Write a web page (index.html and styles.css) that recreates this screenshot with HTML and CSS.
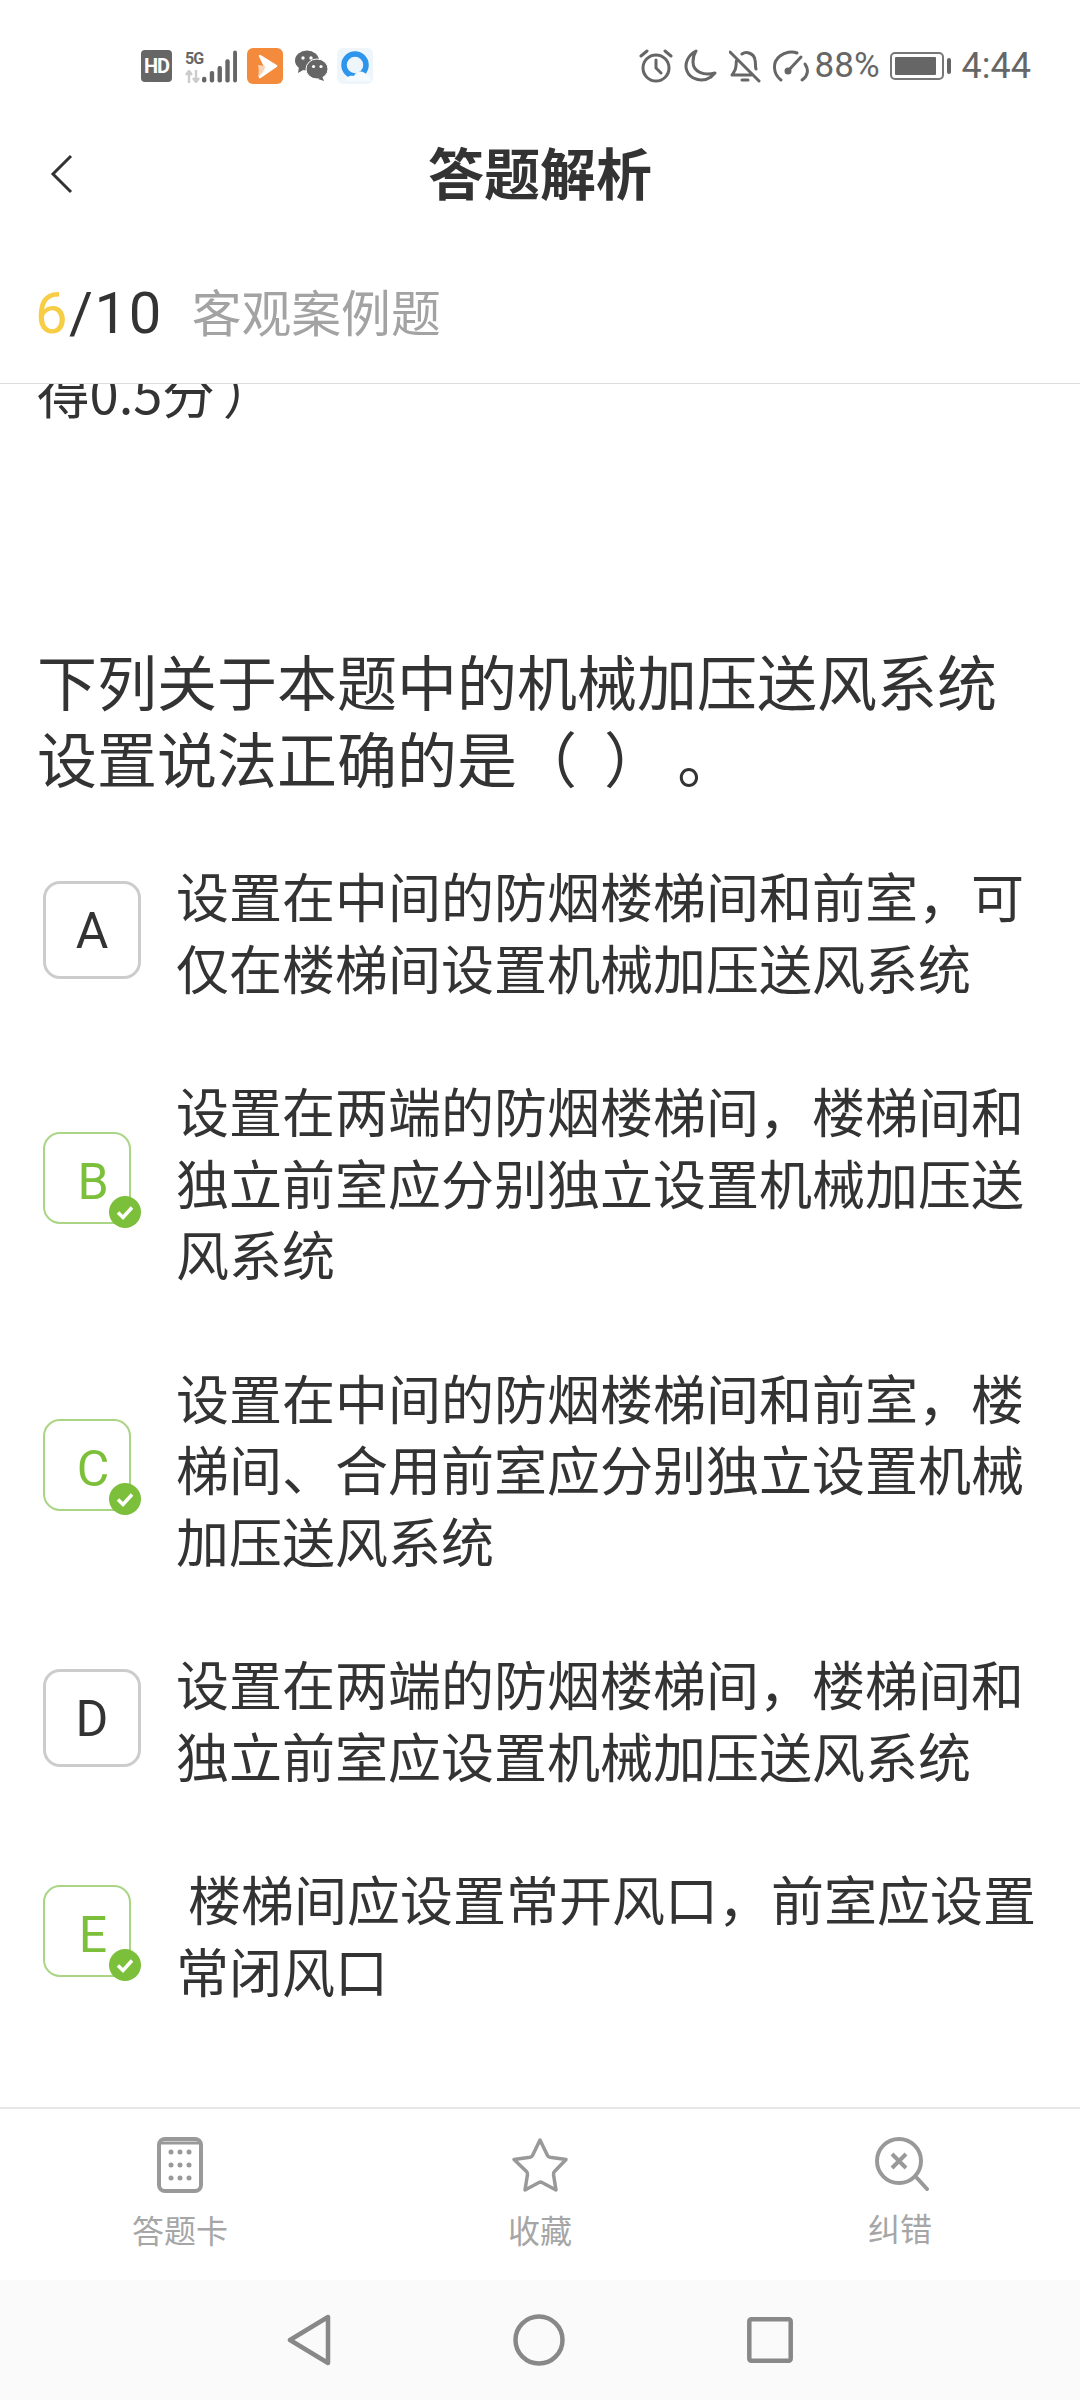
FILE: index.html
```html
<!DOCTYPE html>
<html lang="zh-CN">
<head>
<meta charset="utf-8">
<title>答题解析</title>
<link rel="stylesheet" href="styles.css">
</head>
<body>
<div class="app">
  <div class="status">
    <div class="status-left">
      <span class="hd">HD</span>
      <span class="signal">
        <span class="net"><span class="net-5g">5G</span><svg class="net-arrows" width="15" height="13" viewBox="0 0 15 13"><path d="M4 13V2M1 5l3-4 3 4M11 0v11M8 8l3 4 3-4" fill="none" stroke="#ccc" stroke-width="2.4"/></svg></span>
        <svg class="bars" width="36" height="33" viewBox="0 0 36 33"><g fill="#666"><rect x="0" y="27" width="4.500" height="6" rx="2"/><rect x="8" y="21" width="4.500" height="12" rx="2"/><rect x="16" y="16" width="4.500" height="17" rx="2"/><rect x="24" y="9" width="4.500" height="24" rx="2"/><rect x="32" y="0" width="4" height="33" rx="2"/></g></svg>
      </span>
      <svg class="app-ico" width="36" height="36" viewBox="0 0 36 36"><rect width="36" height="36" rx="6" fill="#f48a3c"/><path d="M13 8l16 10-16 11 5-11z" fill="#fff" stroke="#fff" stroke-width="2.500" stroke-linejoin="round"/><path d="M11 17l7 1c0 4-3 8-7 11 1-4 1-8 0-12z" fill="#fbd3b4"/></svg>
      <svg class="app-ico wechat" width="34" height="32" viewBox="0 0 34 32"><ellipse cx="13" cy="10.500" rx="12" ry="10" fill="#666"/><path d="M5 17l-1 6 7-4z" fill="#666"/><circle cx="9" cy="8" r="1.700" fill="#fff"/><circle cx="17" cy="8" r="1.700" fill="#fff"/><ellipse cx="23" cy="19" rx="11" ry="10" fill="#666" stroke="#fff" stroke-width="1"/><path d="M28 26l2 5-6-2z" fill="#666"/><circle cx="19.500" cy="16.500" r="1.600" fill="#fff"/><circle cx="27" cy="16.500" r="1.600" fill="#fff"/></svg>
      <svg class="app-ico" width="36" height="36" viewBox="0 0 36 36"><rect width="36" height="36" rx="6" fill="#eef5fb"/><circle cx="18" cy="17" r="11" fill="none" stroke="#2d96ec" stroke-width="5.500"/><path d="M9 33c0-4 4-6 8-5 2-6 11-6 13 0 3 0 4 2 4 5z" fill="#f6fbff"/></svg>
    </div>
    <div class="status-right">
      <svg class="ri-a" width="34" height="34" viewBox="0 0 34 34" fill="none" stroke="#666" stroke-width="3" stroke-linecap="round"><circle cx="17" cy="19" r="13"/><path d="M17 11v8l5 5M2 7l6-5M32 7l-6-5"/></svg>
      <svg class="ri-b" width="34" height="34" viewBox="0 0 34 34" fill="none" stroke="#666" stroke-width="3" stroke-linejoin="round"><path d="M13 2C5 6 1 15 4 22c3 8 15 12 24 6l4-4c-11 3-22-1-22-11 0-4 1-8 3-11z"/></svg>
      <svg class="ri-c" width="32" height="34" viewBox="0 0 32 34" fill="none" stroke="#666" stroke-width="3" stroke-linecap="round" stroke-linejoin="round"><path d="M1 3l29 29M8 10c-1 2-1 4-1 7 0 4-2 6-4 9h19M13 5c4-3 12-1 13 6 1 4 0 6 1 9"/><path d="M13 31h6"/></svg>
      <svg class="ri-d" width="38" height="34" viewBox="0 0 38 34" fill="none" stroke="#666" stroke-width="3" stroke-linecap="round"><path d="M9 31C1 25 0 13 8 7c5-4 12-5 17-3M33 15c4 6 3 12-3 16"/><path d="M16 22L29 8"/><circle cx="16" cy="22" r="2" fill="#666"/></svg>
      <span class="pct">88%</span>
      <span class="battery"><span class="battery-fill"></span></span>
      <span class="battery-nub"></span>
      <span class="time">4:44</span>
    </div>
  </div>

  <header class="topbar">
    <svg class="back" width="24" height="40" viewBox="0 0 24 40" fill="none" stroke="#333" stroke-width="3"><path d="M21 2L3 20l18 18"/></svg>
    <h1 class="title">答题解析</h1>
  </header>

  <div class="progress">
    <span class="count"><span class="cur">6</span>/10</span>
    <span class="kind">客观案例题</span>
  </div>

  <main class="scroll">
    <p class="clipped">得0.5分 ）</p>
    <p class="question">下列关于本题中的机械加压送风系统设置说法正确的是（&nbsp;&nbsp;）&nbsp;。</p>
    <div class="options">
      <div class="option">
        <span class="badge">A</span>
        <p class="opt-text">设置在中间的防烟楼梯间和前室，可仅在楼梯间设置机械加压送风系统</p>
      </div>
      <div class="option">
        <span class="badge ok">B<svg class="tick" width="32" height="32" viewBox="0 0 32 32"><circle cx="16" cy="16" r="16" fill="#7cbf3a"/><path d="M9 16.500l5 5 9-10" fill="none" stroke="#fff" stroke-width="3.500"/></svg></span>
        <p class="opt-text">设置在两端的防烟楼梯间，楼梯间和独立前室应分别独立设置机械加压送风系统</p>
      </div>
      <div class="option">
        <span class="badge ok">C<svg class="tick" width="32" height="32" viewBox="0 0 32 32"><circle cx="16" cy="16" r="16" fill="#7cbf3a"/><path d="M9 16.500l5 5 9-10" fill="none" stroke="#fff" stroke-width="3.500"/></svg></span>
        <p class="opt-text">设置在中间的防烟楼梯间和前室，楼梯间、合用前室应分别独立设置机械加压送风系统</p>
      </div>
      <div class="option">
        <span class="badge">D</span>
        <p class="opt-text">设置在两端的防烟楼梯间，楼梯间和独立前室应设置机械加压送风系统</p>
      </div>
      <div class="option">
        <span class="badge ok">E<svg class="tick" width="32" height="32" viewBox="0 0 32 32"><circle cx="16" cy="16" r="16" fill="#7cbf3a"/><path d="M9 16.500l5 5 9-10" fill="none" stroke="#fff" stroke-width="3.500"/></svg></span>
        <p class="opt-text opt-indent">楼梯间应设置常开风口，前室应设置常闭风口</p>
      </div>
    </div>
  </main>

  <nav class="tabs">
    <div class="tab">
      <svg width="46" height="56" viewBox="0 0 46 56"><rect x="2" y="2" width="42" height="52" rx="6" fill="none" stroke="#999" stroke-width="4"/><path d="M4 6h38" stroke="#999" stroke-width="3"/><g fill="#999"><circle cx="14" cy="15" r="2.500"/><circle cx="23" cy="15" r="2.500"/><circle cx="32" cy="15" r="2.500"/><circle cx="14" cy="28" r="2.500"/><circle cx="23" cy="28" r="2.500"/><circle cx="32" cy="28" r="2.500"/><circle cx="14" cy="41" r="2.500"/><circle cx="23" cy="41" r="2.500"/><circle cx="32" cy="41" r="2.500"/></g></svg>
      <span class="tab-label">答题卡</span>
    </div>
    <div class="tab">
      <svg width="58" height="56" viewBox="0 0 58 56"><path d="M29 3l7.500 15.500c.5 1 1.500 1.500 2.500 1.700L55 22.500 43.500 34.500c-1 1-1.200 2-1 3l2.500 15.500-14-7.500c-1-.5-2-.5-3 0L14 53l2.500-15.500c.2-1 0-2-1-3L3 22.500l16-2.300c1-.2 2-.7 2.500-1.700z" fill="none" stroke="#999" stroke-width="3.500" stroke-linejoin="round"/></svg>
      <span class="tab-label">收藏</span>
    </div>
    <div class="tab tab-fix">
      <svg width="54" height="54" viewBox="0 0 54 54" fill="none" stroke="#999" stroke-width="4"><circle cx="24" cy="24" r="22"/><path d="M17 17l14 14M31 17L17 31"/><path d="M42 41l10 11" stroke-linecap="round"/></svg>
      <span class="tab-label">纠错</span>
    </div>
  </nav>

  <div class="sysnav">
    <svg width="44" height="52" viewBox="0 0 44 52" fill="none" stroke="#888" stroke-width="4.500" stroke-linejoin="round"><path d="M41 3v46L3 26z"/></svg>
    <svg width="52" height="52" viewBox="0 0 52 52" fill="none" stroke="#888" stroke-width="4.500"><circle cx="26" cy="26" r="23.500"/></svg>
    <svg width="46" height="46" viewBox="0 0 46 46" fill="none" stroke="#888" stroke-width="4.500"><rect x="2.300" y="2.300" width="41.400" height="41.400" rx="2"/></svg>
  </div>
</div>
</body>
</html>
```
FILE: styles.css
```css
* { box-sizing: border-box; }
html, body { margin: 0; padding: 0; background: #fff; }
body { font-family: "Noto Sans CJK SC", "Noto Sans", sans-serif; color: #333; }
p, h1 { margin: 0; }
.app { width: 1080px; height: 2400px; display: flex; flex-direction: column; overflow: hidden; }

.status { height: 100px; flex: none; display: flex; justify-content: space-between; align-items: flex-start; padding: 48px 49px 0 141px; }
.status-left { display: flex; align-items: center; height: 36px; }
.status-right { display: flex; align-items: center; height: 36px; }
.hd { width: 31px; height: 32px; background: #666; color: #fff; border-radius: 4px; font: 700 20px/32px "Roboto", sans-serif; text-align: center; letter-spacing: -1px; }
.signal { display: flex; align-items: flex-end; margin-left: 13px; width: 52px; height: 34px; }
.net { display: flex; flex-direction: column; width: 17px; }
.net-5g { font: 700 16px/16px "Roboto", sans-serif; color: #666; letter-spacing: -1px; }
.net-arrows { display: block; margin-top: 3px; }
.bars { display: block; }
.app-ico { display: block; margin-left: 10px; }
.wechat { margin-left: 11px; margin-right: -1px; }
.status-right svg { display: block; }
.ri-a { margin-right: 10px; }
.ri-b { margin-right: 12px; }
.ri-c { margin-right: 11px; }
.ri-d { margin-right: 5px; }
.pct { font: 400 35px/36px "Roboto", sans-serif; color: #666; }
.battery { width: 54px; height: 28px; border: 2px solid #777; border-radius: 5px; padding: 3px; margin-left: 10px; display: flex; }
.battery-fill { width: 41px; background: #666; border-radius: 1px; }
.battery-nub { width: 4px; height: 16px; background: #666; border-radius: 2px; margin-left: 3px; }
.time { font: 400 36px/36px "Roboto", sans-serif; color: #666; margin-left: 11px; }

.topbar { height: 150px; flex: none; display: flex; align-items: center; justify-content: center; position: relative; }
.back { position: absolute; left: 50px; top: 54px; }
.title { font-size: 56px; font-weight: 700; color: #333; line-height: 80px; margin-top: -9px; }

.progress { height: 134px; flex: none; display: flex; align-items: center; padding: 0 0 8px 35px; border-bottom: 1px solid #ddd; background: #fff; position: relative; z-index: 1; }
.count { font: 400 58px/80px "Roboto", sans-serif; color: #333; letter-spacing: 1.500px; }
.cur { color: #f8cd46; }
.kind { font-size: 49.800px; color: #a3a3a3; margin-left: 29px; margin-bottom: 6px; line-height: 80px; }

.scroll { flex: 1; min-height: 0; overflow: hidden; padding: 0 26px 0 37px; }
.clipped { font-size: 52.500px; line-height: 72px; margin-top: -29px; color: #333; word-spacing: -4px; }
.question { font-size: 60px; line-height: 77px; margin-top: 214px; }
.options { display: flex; flex-direction: column; gap: 72px; margin-top: 65px; }
.option { display: flex; align-items: center; margin-left: 6px; }
.badge { flex: none; width: 98px; height: 98px; border: 3px solid #ccc; border-radius: 17px; font: 400 50px/94px "Roboto", sans-serif; color: #333; text-align: center; position: relative; margin-bottom: 3px; }
.badge.ok { width: 88px; height: 92px; border: 2px solid #a9d585; color: #7cbf3a; line-height: 96px; margin-right: 10px; margin-bottom: 8px; padding-left: 12px; }
.tick { position: absolute; right: -12px; bottom: -6px; }
.opt-text { margin-left: 35px; font-size: 53px; line-height: 71.500px; color: #333; width: 860px; }
.opt-indent { text-indent: 12px; }

.tabs { height: 173px; flex: none; border-top: 2px solid #e6e6e6; display: grid; grid-template-columns: repeat(3, 360px); }
.tab { display: flex; flex-direction: column; align-items: center; padding-top: 28px; }
.tab-label { font-size: 32px; line-height: 44px; color: #a6a6a6; margin-top: 14px; }
.tab-fix svg { margin-left: 3px; }

.sysnav { height: 120px; flex: none; background: #fafafa; display: flex; justify-content: center; align-items: center; gap: 182px; }
.sysnav svg { display: block; }
```
